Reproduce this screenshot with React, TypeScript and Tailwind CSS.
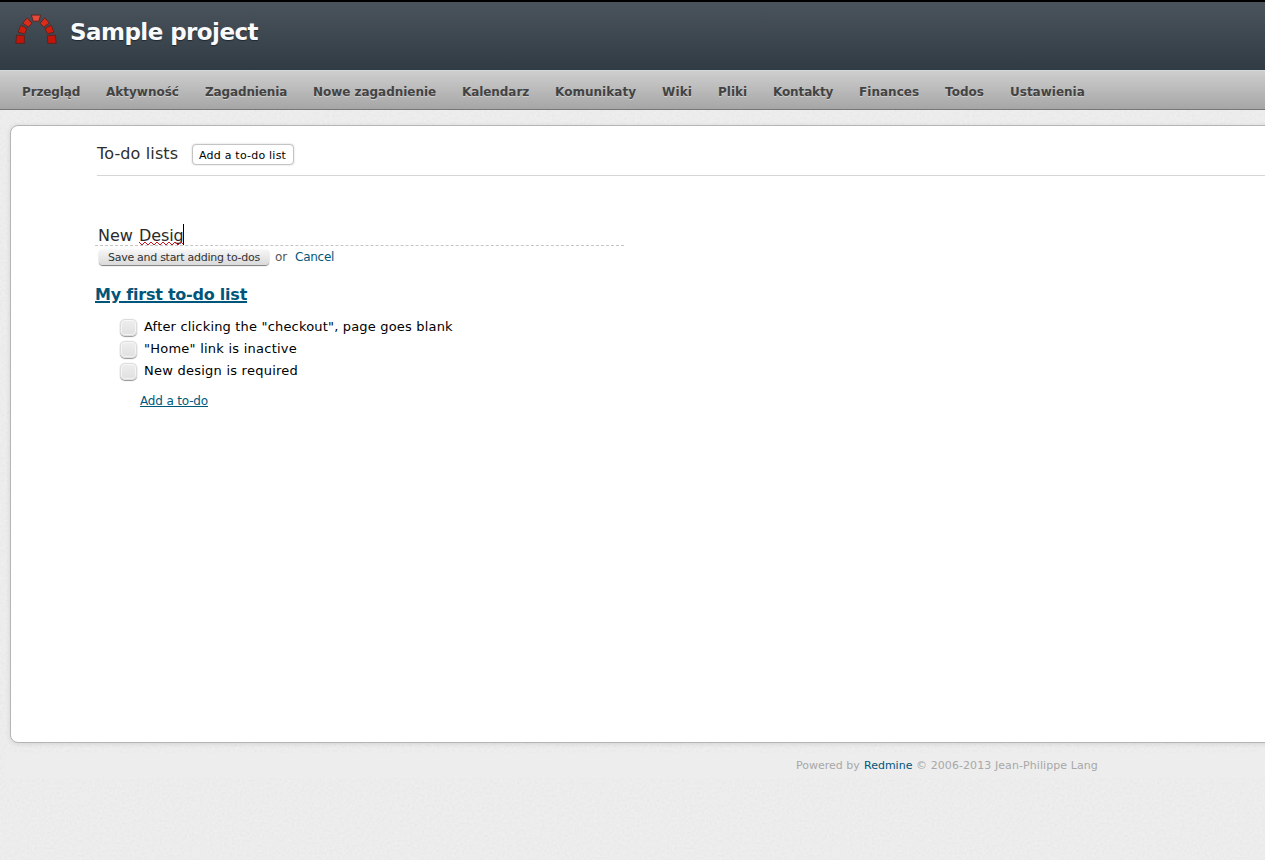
const tabs = [
  { label: "Przegląd", cls: "w-[58px] tracking-[-0.12px]" },
  { label: "Aktywność", cls: "w-[73px]" },
  { label: "Zagadnienia", cls: "w-[82px] tracking-[-0.13px]" },
  { label: "Nowe zagadnienie", cls: "w-[123px] tracking-[-0.03px]" },
  { label: "Kalendarz", cls: "w-[67px] tracking-[-0.07px]" },
  { label: "Komunikaty", cls: "w-[81px] tracking-[0.04px]" },
  { label: "Wiki", cls: "w-[30px] tracking-[0.15px]" },
  { label: "Pliki", cls: "w-[29px]" },
  { label: "Kontakty", cls: "w-[60px] tracking-[-0.12px]" },
  { label: "Finances", cls: "w-[60px] tracking-[0.04px]" },
  { label: "Todos", cls: "w-[39px] tracking-[0.04px]" },
  { label: "Ustawienia", cls: "w-[75px]" },
];

const todos = [
  { text: 'After clicking the "checkout", page goes blank', cls: "tracking-[0.18px]" },
  { text: '"Home" link is inactive', cls: "tracking-[0.24px]" },
  { text: "New design is required", cls: "tracking-[0.24px]" },
];

function Logo() {
  return (
    <svg width="44" height="32" viewBox="0 0 44 32" className="shrink-0">
      <g stroke="#59211f" strokeWidth="0.9" strokeLinejoin="round">
        <path d="M2.7 21 10.6 21.8 10.2 29.4 1.8 29.4Z" fill="#c01508" />
        <path d="M6.8 11.2 13 14.6 10.7 19.8 4 18.2Z" fill="#cf1d0c" />
        <path d="M13.2 3.8 18 9.3 14.2 13 8.7 9.1Z" fill="#dc2c1a" />
        <path d="M17.4 1.1 26.6 1.1 24.9 7.2 19.1 7.2Z" fill="#e5493c" />
        <path d="M30.8 3.8 26 9.3 29.8 13 35.3 9.1Z" fill="#dc2c1a" />
        <path d="M37.2 11.2 31 14.6 33.3 19.8 40 18.2Z" fill="#cf1d0c" />
        <path d="M41.3 21 33.4 21.8 33.8 29.4 42.2 29.4Z" fill="#c01508" />
      </g>
    </svg>
  );
}

function PaperGrain() {
  return (
    <svg className="absolute inset-0 size-full opacity-[0.08]" aria-hidden="true">
      <filter id="grain" x="0" y="0" width="100%" height="100%">
        <feTurbulence type="fractalNoise" baseFrequency="0.4" numOctaves="2" stitchTiles="stitch" />
        <feColorMatrix type="saturate" values="0" />
        <feComponentTransfer>
          <feFuncA type="linear" slope="0" intercept="1" />
        </feComponentTransfer>
      </filter>
      <rect width="100%" height="100%" filter="url(#grain)" />
    </svg>
  );
}

function Squiggle() {
  return (
    <svg width="44" height="5" viewBox="0 0 44 5" className="absolute left-0 top-[17px]">
      <path
        d="M0 1 3 4 6 1 9 4 12 1 15 4 18 1 21 4 24 1 27 4 30 1 33 4 36 1 39 4 42 1 44 3"
        fill="none"
        stroke="#c8141c"
        strokeWidth="1"
      />
    </svg>
  );
}

export default function App() {
  return (
    <div className="relative flex h-[860px] w-full flex-col overflow-hidden bg-[#f1f1f1] font-['DejaVu_Sans',Verdana,sans-serif] whitespace-nowrap">
      <PaperGrain />

      <header className="relative flex h-[70px] shrink-0 items-start border-t-2 border-black bg-linear-to-b from-[#4b545d] to-[#303b43] pl-[14px] pt-3">
        <Logo />
        <h1 className="ml-3 mt-[3px] text-[23px] leading-[30px] font-bold tracking-[-0.55px] text-[#f8fafc] [text-shadow:0_1px_1px_#20282e]">
          Sample project
        </h1>
      </header>

      <nav className="relative flex h-10 shrink-0 items-center gap-[26px] border-t border-b border-t-[#d4d9dc] border-b-[#777] bg-linear-to-b from-[#cecece] to-[#a6a6a6] pl-[22px] pt-1">
        {tabs.map((tab) => (
          <a
            key={tab.label}
            className={`shrink-0 text-xs font-bold text-[#434343] [text-shadow:0_1px_0_#d0d0d0] ${tab.cls}`}
          >
            {tab.label}
          </a>
        ))}
      </nav>

      <main className="relative -mr-3 mt-[15px] ml-[10px] h-[618px] shrink-0 rounded-lg border border-[#b5b5b5] bg-white shadow-[0_1px_5px_rgba(0,0,0,0.11)]">
        <div className="ml-[86px] flex h-[50px] items-start border-b border-[#d5d5d5] pt-[17px]">
          <h2 className="w-[81px] text-base leading-[22px] tracking-[0.13px] text-[#2d2d2d]">To-do lists</h2>
          <button className="ml-[14px] mt-px h-[21px] w-[102px] rounded-[4px] border border-[#c4c4c4] bg-white pl-[6px] text-left text-[11px] leading-[21px] tracking-[0.22px] text-black shadow-[0_0_2px_rgba(0,0,0,0.2)]">
            Add a to-do list
          </button>
        </div>

        <div className="ml-[84px] mt-[48px] flex h-[22px] w-[529px] items-start border-b border-dashed border-[#c6c6c6] pl-[3px] text-base leading-[24px] text-[#2a2a2a]">
          <span className="w-[41px]">New</span>
          <span className="relative w-11 tracking-[-0.1px]">
            Desig
            <Squiggle />
          </span>
          <span className="h-[21px] w-px bg-black" />
        </div>

        <div className="ml-[88px] mt-[3px] flex h-4 items-center text-xs leading-4 text-[#555]">
          <button className="mt-px h-[15px] w-[170px] rounded-[4px] bg-linear-to-b from-[#f6f6f6] to-[#dadada] pl-[9px] text-left text-[11px] leading-[15px] tracking-[-0.28px] text-[#333] shadow-[0_1px_1px_rgba(0,0,0,0.5),0_0_1px_rgba(0,0,0,0.25)]">
            Save and start adding to-dos
          </button>
          <span className="ml-[6px] w-5">or</span>
          <a className="tracking-[-0.25px] text-[#00587c]">Cancel</a>
        </div>

        <h3 className="ml-[84px] mt-[19px] text-base leading-[22px] font-bold tracking-[-0.23px] text-[#00557a]">
          <a className="underline decoration-2 underline-offset-[1px]">My first to-do list</a>
        </h3>

        <ul className="ml-[109px] mt-[10px]">
          {todos.map((todo) => (
            <li key={todo.text} className="flex h-[22px] items-center">
              <span className="size-[17px] rounded-[5px] border border-[#dcdcdc] bg-linear-to-b from-[#eeeeee] to-[#e0e0e0] shadow-[inset_0_0_0_1px_rgba(255,255,255,0.6),0_1px_1px_rgba(0,0,0,0.4),0_0_1px_rgba(0,0,0,0.2)]" />
              <span className={`ml-[7px] text-[13px] leading-[22px] text-black ${todo.cls}`}>{todo.text}</span>
            </li>
          ))}
        </ul>
        <a className="ml-[129px] mt-[10px] block w-fit text-xs leading-[18px] tracking-[-0.16px] text-[#00587c] underline underline-offset-1">
          Add a to-do
        </a>
      </main>

      <footer className="relative mt-[10px] ml-[5px] flex h-[25px] shrink-0 items-center bg-[#ededed] pl-[791px] pt-px text-[11px] text-[#a8a8a8]">
        <span className="w-[68px]">Powered by</span>
        <a className="w-[52px] text-[#00557a]">Redmine</a>
        <span className="tracking-[0.08px]">© 2006-2013 Jean-Philippe Lang</span>
      </footer>
    </div>
  );
}
